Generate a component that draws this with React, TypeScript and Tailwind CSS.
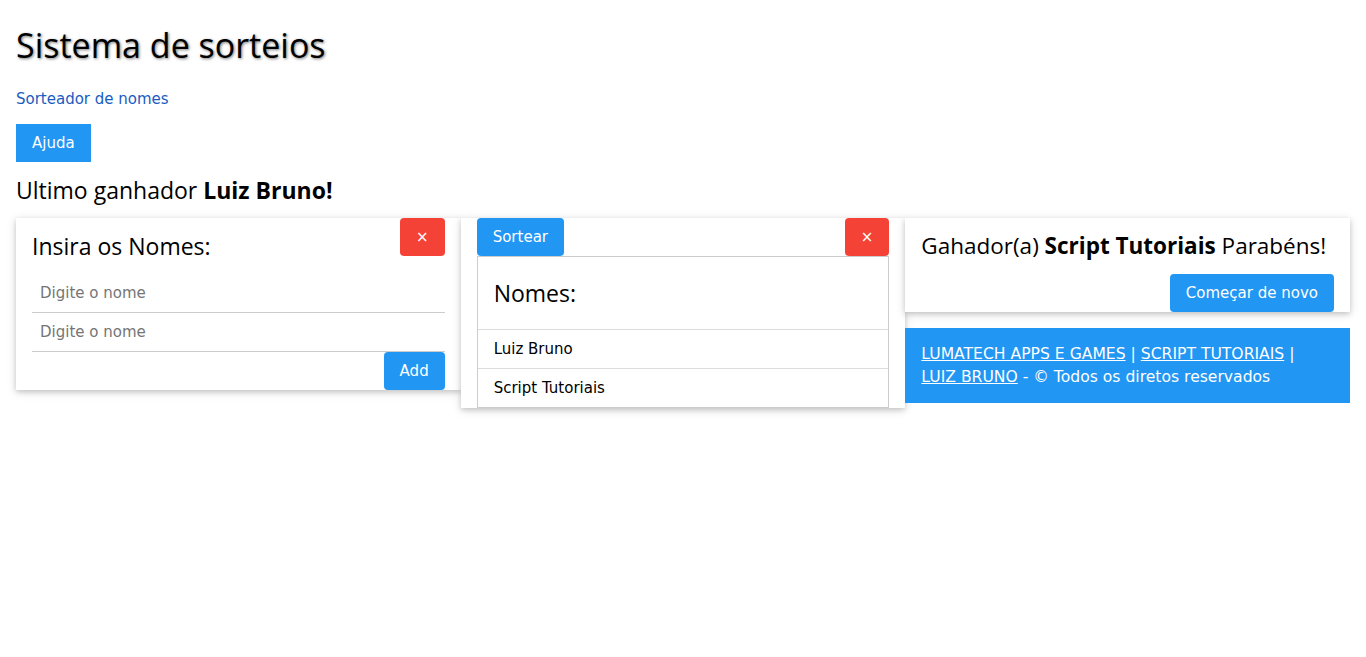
import React from 'react';

const heading = "font-['Open_Sans','Liberation_Sans',sans-serif]";
const card = 'bg-white shadow-[0_2px_5px_0_rgba(0,0,0,0.16),0_2px_10px_0_rgba(0,0,0,0.12)]';
const btn = 'px-4 py-2 text-[15px] leading-[22px] text-white';
const input = 'block w-full border-b border-[#ccc] px-2 py-2 leading-[22px] outline-none placeholder:text-[#757575]';

const App: React.FC = () => {
  return (
    <div className="min-h-screen bg-white px-4 text-[15px] leading-[22.5px] text-black font-['DejaVu_Sans','Verdana',sans-serif]">
      <h1 className={`${heading} pt-[18px] text-[34px] leading-[54px] [text-shadow:1px_1px_3px_#777]`}>
        Sistema de sorteios
      </h1>
      <p className="mt-[16px] leading-[22px] text-[#1a5cc0]">Sorteador de nomes</p>
      <button className={`${btn} mt-[14px] block bg-[#2196f3]`}>Ajuda</button>
      <h3 className={`${heading} mt-[10px] text-[23px] leading-[36px]`}>
        Ultimo ganhador <b>Luiz Bruno!</b>
      </h3>

      <div className="mt-[10px] grid grid-cols-3">
        {/* Inserir nomes */}
        <div className="self-start">
          <div className={`${card} px-4`}>
            <div className="flex items-start justify-between">
              <h3 className={`${heading} my-[10px] text-[23px] leading-[36px]`}>Insira os Nomes:</h3>
              <button className={`${btn} rounded bg-[#f44336]`}>×</button>
            </div>
            <input className={input} placeholder="Digite o nome" />
            <input className={input} placeholder="Digite o nome" />
            <div className="flex justify-end">
              <button className={`${btn} rounded bg-[#2196f3]`}>Add</button>
            </div>
          </div>
        </div>

        {/* Lista de nomes */}
        <div className="self-start">
          <div className={`${card} px-4`}>
            <div className="flex justify-between">
              <button className={`${btn} rounded bg-[#2196f3]`}>Sortear</button>
              <button className={`${btn} rounded bg-[#f44336]`}>×</button>
            </div>
            <ul className="border border-[#ccc]">
              <li className="border-b border-[#ddd] px-4 py-2">
                <h3 className={`${heading} my-[10px] text-[23px] leading-[36px]`}>Nomes:</h3>
              </li>
              <li className="border-b border-[#ddd] px-4 py-2 leading-[22px]">Luiz Bruno</li>
              <li className="px-4 py-2 leading-[22px]">Script Tutoriais</li>
            </ul>
          </div>
        </div>

        {/* Ganhador */}
        <div className="self-start">
          <div className={`${card} px-4`}>
            <h3 className={`${heading} whitespace-nowrap py-[10px] text-[22.5px] leading-[36px]`}>
              Gahador(a) <b>Script Tutoriais</b> Parabéns!
            </h3>
            <div className="flex justify-end">
              <button className={`${btn} rounded bg-[#2196f3]`}>Começar de novo</button>
            </div>
          </div>
          <div className="mt-4 bg-[#2196f3] px-4 py-[15px] text-[15.6px] text-white">
            <a href="#" className="underline">LUMATECH APPS E GAMES</a> |{' '}
            <a href="#" className="underline">SCRIPT TUTORIAIS</a> |{' '}
            <a href="#" className="underline">LUIZ BRUNO</a> - © Todos os diretos reservados
          </div>
        </div>
      </div>
    </div>
  );
};

export default App;
